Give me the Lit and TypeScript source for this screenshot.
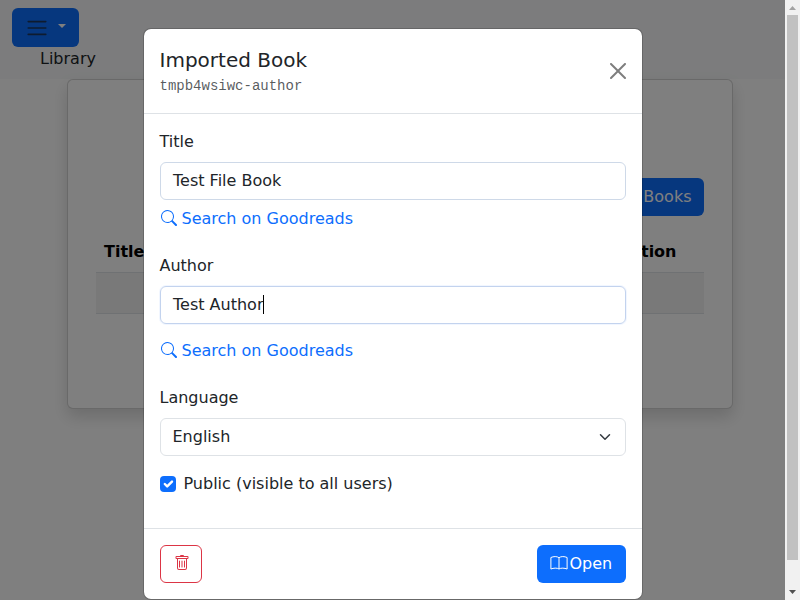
import { LitElement, html, css } from "lit";
import { customElement, state } from "lit/decorators.js";

const searchIcon = html`<svg viewBox="0 0 16 16" width="16" height="16" fill="currentColor"><path d="M11.742 10.344a6.5 6.5 0 1 0-1.397 1.398h-.001c.03.04.062.078.098.115l3.85 3.85a1 1 0 0 0 1.415-1.414l-3.85-3.85a1.007 1.007 0 0 0-.115-.1zM12 6.5a5.5 5.5 0 1 1-11 0 5.5 5.5 0 0 1 11 0z"/></svg>`;
const trashIcon = html`<svg viewBox="0 0 16 16" width="16" height="16" fill="currentColor"><path d="M5.5 5.5A.5.5 0 0 1 6 6v6a.5.5 0 0 1-1 0V6a.5.5 0 0 1 .5-.5Zm2.5 0a.5.5 0 0 1 .5.5v6a.5.5 0 0 1-1 0V6a.5.5 0 0 1 .5-.5Zm3 .5a.5.5 0 0 0-1 0v6a.5.5 0 0 0 1 0V6Z"/><path d="M14.5 3a1 1 0 0 1-1 1H13v9a2 2 0 0 1-2 2H5a2 2 0 0 1-2-2V4h-.5a1 1 0 0 1-1-1V2a1 1 0 0 1 1-1H6a1 1 0 0 1 1-1h2a1 1 0 0 1 1 1h3.5a1 1 0 0 1 1 1v1ZM4.118 4 4 4.059V13a1 1 0 0 0 1 1h6a1 1 0 0 0 1-1V4.059L11.882 4H4.118ZM2.5 3h11V2h-11v1Z"/></svg>`;
const bookIcon = html`<svg class="book" viewBox="0 0 18 16" width="18" height="16" fill="none" stroke="currentColor"><path d="M9 2.7C7 1.200 3.500 1.300.9 2.500v11.500C3.500 13 7 12.700 9 14c2-1.300 5.500-1 8.100 0V2.500C14.500 1.300 11 1.200 9 2.700V14"/></svg>`;

@customElement("app-root")
export class AppRoot extends LitElement {
  @state() private bookTitle = "Test File Book";
  @state() private author = "Test Author";

  static styles = css`
    :host { display: block; position: relative; width: 800px; height: 600px; overflow: hidden; background: #fff; color: #212529; font: 16px/24px "DejaVu Sans", sans-serif; }
    * { box-sizing: border-box; }
    svg { display: block; flex: none; }
    .nav { height: 79px; background: #f8f9fa; padding: 8px 12px; }
    .menu { width: 67px; height: 39px; border-radius: 6px; background: #0d6efd; display: flex; align-items: flex-start; padding: 8px 13px; gap: 9px; }
    .caret { width: 8px; height: 4px; margin-top: 8px; background: #fff; clip-path: polygon(0 0, 100% 0, 50% 100%); }
    .library { padding-left: 28px; color: #212529; }
    .card { width: 666px; height: 330px; margin: 0 auto; border: 1px solid rgba(0,0,0,.175); border-radius: 6px; box-shadow: 0 8px 16px rgba(0,0,0,.15); padding: 98px 28px 0; background: #fff; }
    .import { display: flex; width: 160px; height: 38px; margin-left: auto; justify-content: flex-end; padding: 7px 12.5px 7px 13px; color: #fff; background: #0d6efd; border-radius: 6px; white-space: nowrap; }
    .thead { display: flex; justify-content: space-between; padding: 24px 27.5px 8px 8px; height: 56px; font-weight: 700; color: #000; }
    .empty { height: 42px; background: #f2f2f2; border: solid #dee2e6; border-width: 1px 0; }
    .overlay { position: absolute; inset: 0; display: flex; background: rgba(0,0,0,.5); }
    .stage { flex: 1; display: flex; justify-content: center; align-items: flex-start; padding-top: 28px; }
    .modal { width: 500px; height: 572px; border: 1px solid rgba(0,0,0,.175); border-radius: 8px; background: #fff; background-clip: padding-box; }
    .head { height: 85px; border-bottom: 1px solid #dee2e6; padding: 16px; display: flex; justify-content: space-between; align-items: center; }
    h1 { font-size: 20px; line-height: 30px; font-weight: 400; margin: 0; }
    .file { font: 14px/22px "Liberation Mono", monospace; color: rgba(33,37,41,.75); }
    .close { opacity: .5; }
    .body { height: 414px; padding: 16px; }
    .label { height: 32px; }
    .field { height: 38px; border: 1px solid #ced9e8; border-radius: 6px; padding: 6px 12px 6px 12.5px; display: flex; align-items: center; }
    .active { border-color: #c3d3ee; box-shadow: 0 0 0 1px rgba(13,110,253,.06); }
    .cursor { width: 1px; height: 19px; margin: 0 0 1px -.5px; background: #000; }
    .link { display: flex; height: 24px; align-items: center; gap: 5px; padding-left: 1px; color: #0d6efd; margin: 6px 0 24px; }
    .link span { padding-top: 2px; }
    .far { margin-top: 14px; }
    .select { justify-content: space-between; border-color: #dee2e6; padding-left: 12px; }
    .check { display: flex; gap: 8px; margin-top: 16px; align-items: center; }
    .box { width: 16px; height: 16px; border-radius: 4px; background: #0d6efd; }
    .foot { border-top: 1px solid #dee2e6; padding: 16px; display: flex; justify-content: space-between; }
    .delete { width: 42px; height: 38px; color: #dc3545; border: 1px solid; border-radius: 6px; padding: 9px 0 0 13px; }
    .open { height: 38px; width: 89px; padding: 7px 13px; color: #fff; background: #0d6efd; border-radius: 6px; display: flex; gap: 2px; }
    .book { margin-top: 3px; }
    .scroll { width: 15px; background: #f1f1f1; display: flex; flex-direction: column; align-items: center; padding: 6px 0; }
    .up, .down { width: 7px; height: 4px; background: #a3a3a3; clip-path: polygon(50% 0, 100% 100%, 0 100%); }
    .down { background: #505050; clip-path: polygon(0 0, 100% 0, 50% 100%); margin-top: 30px; }
    .thumb { width: 11px; height: 545px; margin-top: 5px; background: #c1c1c1; }
  `;

  private link(far = false) {
    return html`<div class="link ${far ? "far" : ""}">${searchIcon}<span>Search on Goodreads</span></div>`;
  }

  render() {
    return html`
      <div class="nav">
        <div class="menu">
          <svg width="24" height="24" viewBox="0 0 30 30"><path d="M4 7h22M4 15h22M4 23h22" stroke="rgba(33,37,41,.75)" stroke-width="2" stroke-linecap="round"/></svg>
          <span class="caret"></span>
        </div>
        <div class="library">Library</div>
      </div>
      <div class="card">
        <div class="import">Import Books</div>
        <div class="thead"><span>Title</span><span>Action</span></div>
        <div class="empty"></div>
      </div>
      <div class="overlay">
        <div class="stage">
          <div class="modal">
            <div class="head">
              <div><h1>Imported Book</h1><div class="file">tmpb4wsiwc-author</div></div>
              <svg class="close" width="16" height="16" viewBox="0 0 16 16"><path d="M.293.293a1 1 0 0 1 1.414 0L8 6.586 14.293.293a1 1 0 1 1 1.414 1.414L9.414 8l6.293 6.293a1 1 0 0 1-1.414 1.414L8 9.414l-6.293 6.293a1 1 0 0 1-1.414-1.414L6.586 8 .293 1.707a1 1 0 0 1 0-1.414z"/></svg>
            </div>
            <div class="body">
              <div class="label">Title</div>
              <div class="field">${this.bookTitle}</div>
              ${this.link()}
              <div class="label">Author</div>
              <div class="field active">${this.author}<span class="cursor"></span></div>
              ${this.link(true)}
              <div class="label">Language</div>
              <div class="field select">English
                <svg width="16" height="12" viewBox="0 0 16 16"><path d="m2 5 6 6 6-6" fill="none" stroke="#343a40" stroke-width="2" stroke-linecap="round" stroke-linejoin="round"/></svg>
              </div>
              <div class="check">
                <span class="box"><svg width="16" height="16" viewBox="0 0 20 20"><path d="m6 10 3 3 6-6" fill="none" stroke="#fff" stroke-width="3" stroke-linecap="round" stroke-linejoin="round"/></svg></span>
                <span>Public (visible to all users)</span>
              </div>
            </div>
            <div class="foot">
              <div class="delete">${trashIcon}</div>
              <div class="open">${bookIcon}<span>Open</span></div>
            </div>
          </div>
        </div>
        <div class="scroll"><span class="up"></span><span class="thumb"></span><span class="down"></span></div>
      </div>`;
  }
}
